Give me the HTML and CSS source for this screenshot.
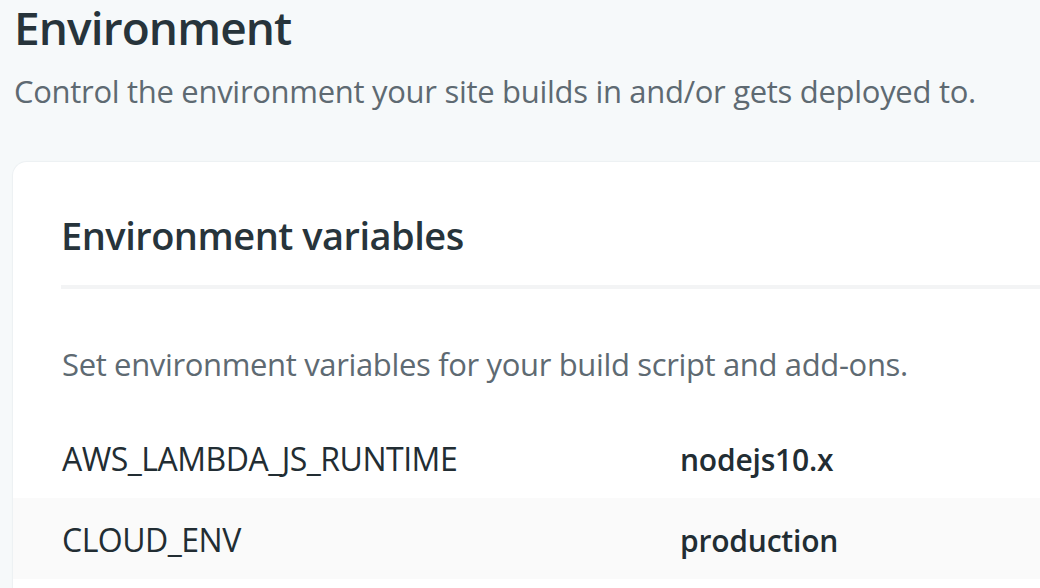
FILE: index.html
```html
<!DOCTYPE html>
<html lang="en">
<head>
<meta charset="utf-8">
<title>Environment</title>
<link rel="stylesheet" href="styles.css">
</head>
<body>
<main class="page">
  <header class="page-head">
    <h1 class="page-title">Environment</h1>
    <p class="page-desc">Control the environment your site builds in and/or gets deployed to.</p>
  </header>
  <section class="card">
    <h2 class="card-title">Environment variables</h2>
    <p class="card-desc">Set environment variables for your build script and add-ons.</p>
    <dl class="vars">
      <div class="var-row">
        <dt class="var-key">AWS_LAMBDA_JS_RUNTIME</dt>
        <dd class="var-value">nodejs10.x</dd>
      </div>
      <div class="var-row alt">
        <dt class="var-key">CLOUD_ENV</dt>
        <dd class="var-value">production</dd>
      </div>
    </dl>
  </section>
</main>
</body>
</html>
```

FILE: styles.css
```css
html, body {
  margin: 0;
  padding: 0;
  background: #f6f9fa;
  overflow: hidden;
}

body {
  font-family: "Open Sans", "Noto Sans", "Liberation Sans", sans-serif;
  color: #27343b;
  width: 1040px;
  height: 588px;
}

.page {
  padding-left: 13px;
}

.page-head {
  padding-top: 1px;
  padding-left: 1px;
}

.page-title {
  margin: 0;
  font-size: 46px;
  line-height: 52px;
  font-weight: 600;
  letter-spacing: -0.9px;
  color: #27343b;
}

.page-desc {
  margin: 18px 0 0;
  font-size: 31px;
  line-height: 40px;
  font-weight: 400;
  letter-spacing: -0.3px;
  color: #5e6a72;
}

.card {
  margin-top: 51px;
  width: 1200px;
  background: #ffffff;
  border-radius: 14px;
  box-shadow: 0 0 0 1px #edf1f3, 0 0 3px rgba(0, 0, 0, 0.03);
  padding-top: 49px;
  padding-bottom: 40px;
}

.card-title {
  margin: 0 0 0 48px;
  padding-bottom: 26px;
  border-bottom: 4px solid #f3f4f5;
  font-size: 38px;
  line-height: 48px;
  font-weight: 600;
  letter-spacing: -0.5px;
  color: #27343b;
}

.card-desc {
  margin: 55px 0 0 49px;
  font-size: 31px;
  line-height: 40px;
  letter-spacing: -0.35px;
  color: #5e6a72;
}

.vars {
  margin: 33px 0 0;
}

.var-row {
  display: grid;
  grid-template-columns: 618px 1fr;
  align-items: baseline;
  padding: 22px 0 18px 49px;
}

.var-row.alt {
  background: #fafafa;
}

.var-key {
  margin: 0;
  font-size: 32px;
  line-height: 40px;
  font-weight: 400;
  letter-spacing: -0.5px;
  color: #222d33;
}

.var-value {
  margin: 0;
  font-size: 30px;
  line-height: 40px;
  font-weight: 600;
  letter-spacing: -0.2px;
  color: #222d33;
}
```
